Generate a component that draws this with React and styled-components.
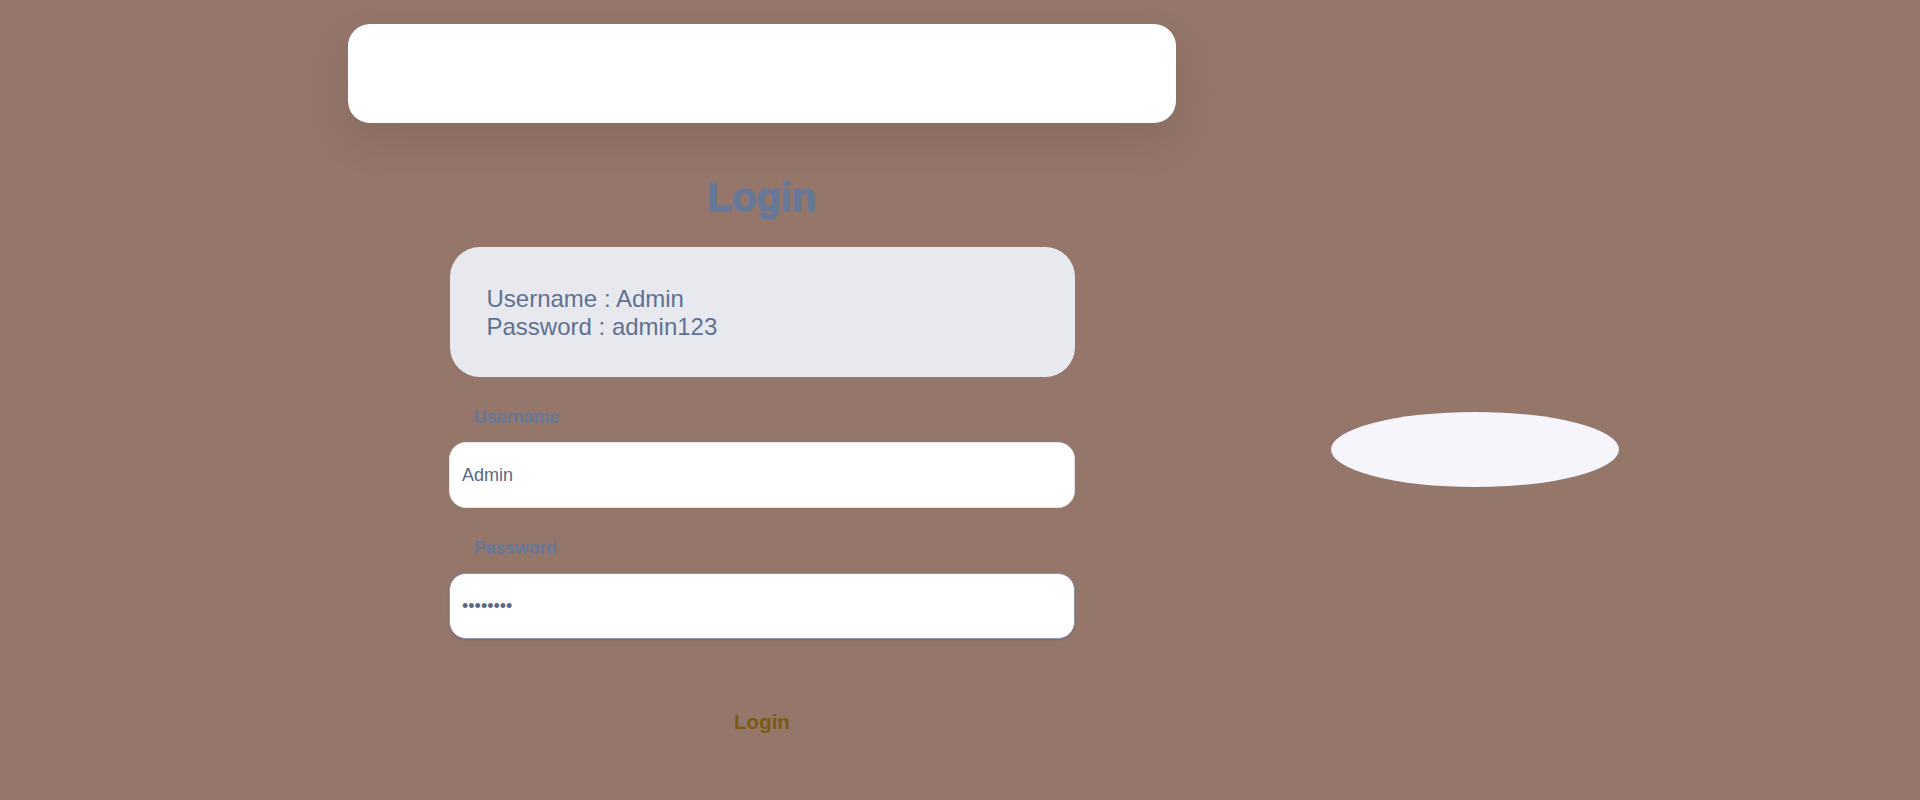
import React from "react";
import styled, { createGlobalStyle } from "styled-components";

const Global = createGlobalStyle`
  ::-webkit-scrollbar {
    width: 15px;
    background: #f6f6fb;
  }
  ::-webkit-scrollbar-track {
    background: #f6f6fb;
  }
  ::-webkit-scrollbar-thumb {
    background: #cdd1dc;
    border: 3px solid #f6f6fb;
    border-radius: 8px;
  }
  ::-webkit-scrollbar-button:single-button {
    display: block;
    height: 14px;
    background-color: #f6f6fb;
    background-repeat: no-repeat;
    background-size: 4px 4px;
  }
  ::-webkit-scrollbar-button:single-button:vertical:decrement {
    background-image:
      linear-gradient(to top left, #c6cad4 50%, transparent 50%),
      linear-gradient(to top right, #c6cad4 50%, transparent 50%);
    background-position: 3.5px 5px, 7.5px 5px;
  }
  ::-webkit-scrollbar-button:single-button:vertical:increment {
    background-image:
      linear-gradient(to bottom left, #c6cad4 50%, transparent 50%),
      linear-gradient(to bottom right, #c6cad4 50%, transparent 50%);
    background-position: 3.5px 5px, 7.5px 5px;
  }
  body {
    margin: 8px;
    background: #94766b;
    font-family: "Liberation Sans", Arial, sans-serif;
  }
`;

const Page = styled.div`
  display: flex;
  align-items: center;
  gap: 155px;
  padding: 16px 0 16px 340px;
`;

const Column = styled.main`
  width: 828px;
  display: flex;
  flex-direction: column;
  align-items: center;
  padding-bottom: 128px;
`;

const TopBar = styled.header`
  align-self: stretch;
  height: 99px;
  background: #ffffff;
  border-radius: 22px;
  box-shadow: 0 18px 40px rgba(60, 30, 20, 0.12);
`;

const Title = styled.h1`
  margin: 52px 0 0;
  font-size: 40px;
  font-weight: 900;
  color: #66789a;
  -webkit-text-stroke: 1.2px #66789a;
`;

const InfoCard = styled.div`
  box-sizing: border-box;
  width: 625px;
  height: 130px;
  margin-top: 27px;
  padding: 38px 37px;
  background: #e8e9ee;
  border-radius: 30px;
  font-size: 24px;
  color: #5f7192;
`;

const Line = styled.div`
  line-height: 27.6px;
`;

const Field = styled.label`
  display: flex;
  flex-direction: column;
  width: 626px;
  margin-top: ${(p) => p.$top}px;
`;

const FieldLabel = styled.span`
  padding-left: 25px;
  font-size: 17.6px;
  font-weight: 700;
  color: #66789a;
  line-height: 20px;
  margin-bottom: 15px;
`;

const Input = styled.input`
  box-sizing: border-box;
  height: 66px;
  padding: 0 12px;
  border: 1px solid #e4e4ea;
  border-radius: 17px;
  background: #ffffff;
  font-family: "Liberation Sans", Arial, sans-serif;
  font-size: 18px;
  color: #5a6886;
  outline: none;
  caret-color: #4a5878;
  &:focus {
    border-color: #8d96ab;
    box-shadow: 0 1px 2px rgba(0, 0, 0, 0.15);
  }
`;

const LoginButton = styled.button`
  margin-top: 59px;
  padding: 12px 30px;
  border: none;
  background: transparent;
  font-family: "Liberation Sans", Arial, sans-serif;
  font-size: 20.5px;
  font-weight: 700;
  color: #7c5a12;
  cursor: pointer;
`;

const Bubble = styled.div`
  width: 288px;
  height: 75px;
  border-radius: 50%;
  background: #f5f5fb;
  flex-shrink: 0;
`;

export default function App() {
  return (
    <>
      <Global />
      <Page>
        <Column>
          <TopBar />
          <Title>Login</Title>
          <InfoCard>
            <Line>Username : Admin</Line>
            <Line>Password : admin123</Line>
          </InfoCard>
          <Field $top={30}>
            <FieldLabel>Username</FieldLabel>
            <Input type="text" defaultValue="Admin" />
          </Field>
          <Field $top={30}>
            <FieldLabel>Password</FieldLabel>
            <Input type="password" defaultValue="admin123" autoFocus />
          </Field>
          <LoginButton>Login</LoginButton>
        </Column>
        <Bubble />
      </Page>
    </>
  );
}
